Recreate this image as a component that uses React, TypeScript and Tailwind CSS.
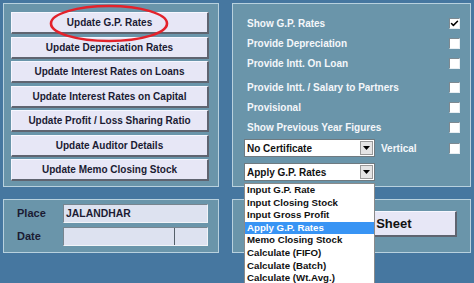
import { Check } from 'lucide-react'

const buttons = [
  'Update G.P. Rates',
  'Update Depreciation Rates',
  'Update Interest Rates on Loans',
  'Update Interest Rates on Capital',
  'Update Profit / Loss Sharing Ratio',
  'Update Auditor Details',
  'Update Memo Closing Stock',
]

const options = [
  'Input G.P. Rate',
  'Input Closing Stock',
  'Input Gross Profit',
  'Apply G.P. Rates',
  'Memo Closing Stock',
  'Calculate (FIFO)',
  'Calculate (Batch)',
  'Calculate (Wt.Avg.)',
]

const CheckBox = ({ checked = false }: { checked?: boolean }) => (
  <div className="w-[11px] h-[11px] bg-white border-t border-l border-[#7d8a92] border-b border-r border-b-[#e8eef2] border-r-[#e8eef2] flex items-center justify-center">
    {checked && <Check size={9} strokeWidth={4} className="text-black" />}
  </div>
)

const Row = ({ label, checked, className = '' }: { label: string; checked?: boolean; className?: string }) => (
  <div className={`h-[20px] flex items-center justify-between pr-[10px] ${className}`}>
    <span className="pl-[3px] text-[10px] font-bold text-[#f4f7fa]">{label}</span>
    <CheckBox checked={checked} />
  </div>
)

const Select = ({ value }: { value: string }) => (
  <div className="w-[131px] h-[18px] bg-white border border-[#6f7a80] flex items-center justify-between">
    <span className="pl-[2px] text-[10px] font-bold text-[#111]">{value}</span>
    <div className="w-[13px] h-[14px] mr-[1px] bg-[#e4e4e4] border border-[#9a9a9a] flex items-center justify-center">
      <svg width="7" height="4" viewBox="0 0 7 4">
        <path d="M0 0h7L3.5 4z" fill="#000" />
      </svg>
    </div>
  </div>
)

const App = () => {
  return (
    <div className="w-[474px] h-[283px] bg-[#4677a0] pt-[3px] pl-[3px] overflow-hidden font-['Liberation_Sans',Arial,sans-serif]">
      <div className="flex gap-[13px]">
        {/* left button panel */}
        <div className="relative w-[216px] h-[184px] bg-[#6a95aa] border border-[#b8d1de] pt-[8px] pl-[7px] flex flex-col gap-[2.5px]">
          {buttons.map(b => (
            <div
              key={b}
              className="w-[198px] h-[22px] bg-[#e7e7f6] border-t border-l border-[#f7f7ff] border-b-2 border-r-2 border-b-[#5f6470] border-r-[#5f6470] flex items-center justify-center text-[10px] font-bold text-[#1b1b33]"
            >
              {b}
            </div>
          ))}
          <svg className="absolute left-[43px] top-[-2px]" width="124" height="43" viewBox="0 0 124 43">
            <ellipse cx="62" cy="21.5" rx="58" ry="17.5" fill="none" stroke="#e3222b" strokeWidth="2.6" />
          </svg>
        </div>

        {/* right options panel */}
        <div className="w-[239px] h-[184px] bg-[#6a95aa] border border-[#b8d1de] pt-[9px] pl-[11px]">
          <Row label="Show G.P. Rates" checked />
          <Row label="Provide Depreciation" />
          <Row label="Provide Intt. On Loan" />
          <Row label="Provide Intt. / Salary to Partners" className="mt-[4px]" />
          <Row label="Provisional" />
          <Row label="Show Previous Year Figures" />
          <div className="mt-[2px] flex items-center pr-[10px]">
            <Select value="No Certificate" />
            <span className="ml-[6px] text-[10px] font-bold text-[#f4f7fa]">Vertical</span>
            <div className="ml-auto">
              <CheckBox />
            </div>
          </div>
          <div className="relative mt-[6px] w-[131px]">
            <Select value="Apply G.P. Rates" />
            <div className="absolute z-10 left-0 top-[20px] w-[131px] bg-white border border-[#8a8a8a]">
              {options.map(o => (
                <div
                  key={o}
                  className={`h-[12.6px] leading-[12.6px] pl-[2px] text-[9.7px] font-bold ${
                    o === 'Apply G.P. Rates' ? 'bg-[#3894f4] text-white' : 'text-[#111]'
                  }`}
                >
                  {o}
                </div>
              ))}
            </div>
          </div>
        </div>
      </div>

      <div className="flex gap-[13px] mt-[12px]">
        {/* place / date */}
        <div className="w-[216px] h-[54px] bg-[#6a95aa] border border-[#b8d1de] pt-[4px] pl-[13px] flex flex-col gap-[4px]">
          <div className="flex items-center">
            <span className="w-[46px] text-[11px] font-bold text-[#1b1b33]">Place</span>
            <div className="w-[145px] h-[19px] bg-[#dde2f0] border-t border-l border-[#77858f] border-b border-r border-b-[#f2f4f8] border-r-[#f2f4f8] flex items-center pl-[2px] text-[10.4px] font-bold text-[#1b1b33]">
              JALANDHAR
            </div>
          </div>
          <div className="flex items-center">
            <span className="w-[46px] text-[11px] font-bold text-[#1b1b33]">Date</span>
            <div className="w-[145px] h-[19px] bg-[#dde2f0] border-t border-l border-[#77858f] border-b border-r border-b-[#f2f4f8] border-r-[#f2f4f8] flex">
              <div className="w-[111px] border-r border-[#55606a]" />
            </div>
          </div>
        </div>

        {/* print button */}
        <div className="w-[239px] h-[54px] bg-[#6a95aa] border border-[#b8d1de] pt-[11px] pl-[12px]">
          <div className="w-[212px] h-[26px] bg-[#e7e7f6] border-t border-l border-[#f7f7ff] border-b-2 border-r-2 border-b-[#5f6470] border-r-[#5f6470] flex items-center justify-center text-[13px] font-bold text-[#111]">
            Print Balance Sheet
          </div>
        </div>
      </div>
    </div>
  )
}

export default App
